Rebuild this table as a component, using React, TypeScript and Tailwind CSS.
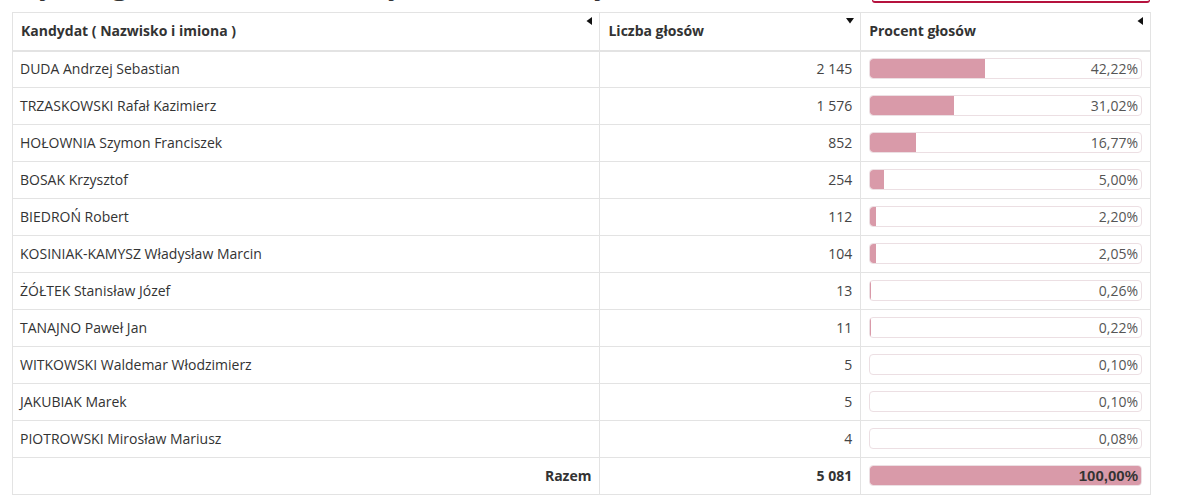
const ROWS: { name: string; votes: string; pct: number }[] = [
  { name: "DUDA Andrzej Sebastian", votes: "2 145", pct: 42.22 },
  { name: "TRZASKOWSKI Rafał Kazimierz", votes: "1 576", pct: 31.02 },
  { name: "HOŁOWNIA Szymon Franciszek", votes: "852", pct: 16.77 },
  { name: "BOSAK Krzysztof", votes: "254", pct: 5.0 },
  { name: "BIEDROŃ Robert", votes: "112", pct: 2.2 },
  { name: "KOSINIAK-KAMYSZ Władysław Marcin", votes: "104", pct: 2.05 },
  { name: "ŻÓŁTEK Stanisław Józef", votes: "13", pct: 0.26 },
  { name: "TANAJNO Paweł Jan", votes: "11", pct: 0.22 },
  { name: "WITKOWSKI Waldemar Włodzimierz", votes: "5", pct: 0.1 },
  { name: "JAKUBIAK Marek", votes: "5", pct: 0.1 },
  { name: "PIOTROWSKI Mirosław Mariusz", votes: "4", pct: 0.08 },
];

function fmtPct(v: number): string {
  return v.toFixed(2).replace(".", ",") + "%";
}

function SortIcon({ dir }: { dir: "left" | "down" }) {
  return (
    <svg width="8" height="8" viewBox="0 0 8 8" className="absolute right-[6px] top-[4px]">
      {dir === "left" ? <polygon points="7,0 7,8 1.5,4" fill="#111" /> : <polygon points="0,1 8,1 4,6.5" fill="#111" />}
    </svg>
  );
}

function Bar({ pct, bold }: { pct: number; bold?: boolean }) {
  // very small shares round down to nothing, as in the original chart
  const w = pct < 0.2 ? 0 : pct;
  return (
    <div className="relative h-[21px] rounded-[4px] border border-[#ecdfe3] bg-white overflow-hidden">
      <div className="absolute left-0 top-0 bottom-0 rounded-l-[3px] bg-[#d99aa9]" style={{ width: `${w}%` }} />
      <span
        className={
          bold
            ? "relative block pr-[3px] text-right text-[15px] leading-[19px] font-bold text-[#333] font-['Liberation_Sans',sans-serif]"
            : "relative block pr-[3px] text-right text-[14px] leading-[19px] text-[#555]"
        }
      >
        {fmtPct(pct)}
      </span>
    </div>
  );
}

export default function App() {
  return (
    <div className="w-[1184px] h-[502px] overflow-hidden bg-white font-['Open_Sans',sans-serif] text-[14px] text-[#333]">
      <div className="flex h-[12px] items-start">
        <div className="ml-[12px] h-[6px] overflow-hidden">
          <h2 className="mt-[-32px] text-[30px] leading-[30px] text-[#333] whitespace-nowrap">
            Wyniki głosowania na kandydatów (w kolejności)
          </h2>
        </div>
        <div className="ml-auto mr-[34px] h-[3px] w-[278px] rounded-b-[4px] border-b-[2px] border-x border-[#b5123e]" />
      </div>

      <table className="ml-[12px] w-[1139px] border-collapse border border-[#e3e3e3]">
        <colgroup>
          <col className="w-[588px]" />
          <col className="w-[261px]" />
          <col className="w-[290px]" />
        </colgroup>
        <thead>
          <tr className="h-[38px] border-b-2 border-[#e3e3e3]">
            <th className="relative border-r border-[#e3e3e3] px-[8px] pb-[1px] text-left font-bold">
              Kandydat ( Nazwisko i imiona )
              <SortIcon dir="left" />
            </th>
            <th className="relative border-r border-[#e3e3e3] px-[8px] pb-[1px] text-left font-bold">
              Liczba głosów
              <SortIcon dir="down" />
            </th>
            <th className="relative px-[8px] pb-[1px] text-left font-bold">
              Procent głosów
              <SortIcon dir="left" />
            </th>
          </tr>
        </thead>
        <tbody>
          {ROWS.map((r) => (
            <tr key={r.name} className="h-[37px] border-b border-[#e3e3e3]">
              <td className="border-r border-[#e3e3e3] px-[7px] pb-[1px]">{r.name}</td>
              <td className="border-r border-[#e3e3e3] px-[8px] pb-[1px] text-right text-[#444]">{r.votes}</td>
              <td className="px-[8px] pb-[1px]">
                <Bar pct={r.pct} />
              </td>
            </tr>
          ))}
          <tr className="h-[37px] border-b border-[#e3e3e3]">
            <td className="border-r border-[#e3e3e3] px-[8px] pb-[1px] text-right font-bold">Razem</td>
            <td className="border-r border-[#e3e3e3] px-[8px] pb-[1px] text-right font-bold">5 081</td>
            <td className="px-[8px] pb-[1px]">
              <Bar pct={100} bold />
            </td>
          </tr>
        </tbody>
      </table>
    </div>
  );
}
